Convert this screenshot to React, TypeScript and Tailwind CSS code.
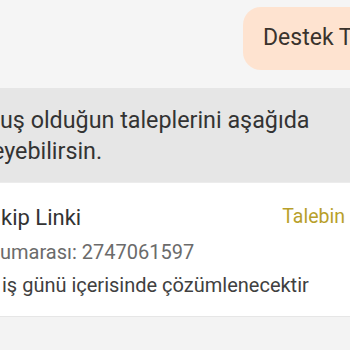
export default function App() {
  return (
    <div
      className="w-[350px] h-[350px] overflow-hidden bg-[#f5f5f5] flex flex-col"
      style={{ fontFamily: 'Roboto, "Noto Sans", sans-serif' }}
    >
      <div className="pt-[7px] pl-[243px] h-[88px] flex">
        <div className="w-[200px] shrink-0 h-[63px] rounded-[18px] bg-[#fee3d0] flex items-center pl-5 text-[23px] text-[#3a332d] whitespace-nowrap">
          Destek Talepleri
        </div>
      </div>
      <div className="bg-[#e6e6e6] h-[94px] pt-[17px] text-[23.3px] leading-[31px] text-[#333333] whitespace-nowrap">
        <div className="ml-[0px]">uş olduğun taleplerini aşağıda</div>
        <div className="ml-[-8px]">eyebilirsin.</div>
      </div>
      <div className="h-[1px] bg-[#ececec]" />
      <div className="bg-white h-[134px] pt-[19px] border-b border-[#e6e6e6] whitespace-nowrap">
        <div className="flex justify-between items-center h-[30px]">
          <span className="ml-[1px] text-[22px] text-[#333333]">kip Linki</span>
          <span className="mr-[5px] text-[19.5px] text-[#b89f2a]">Talebin</span>
        </div>
        <div className="ml-[0px] mt-[5px] h-[30px] flex items-center text-[20px] text-[#6b6b6b]">umarası: 2747061597</div>
        <div className="ml-[2px] mt-[3px] h-[30px] flex items-center text-[20px] text-[#404040]">iş günü içerisinde çözümlenecektir</div>
      </div>
      <div className="flex-1 bg-[#f3f3f3]" />
    </div>
  );
}
